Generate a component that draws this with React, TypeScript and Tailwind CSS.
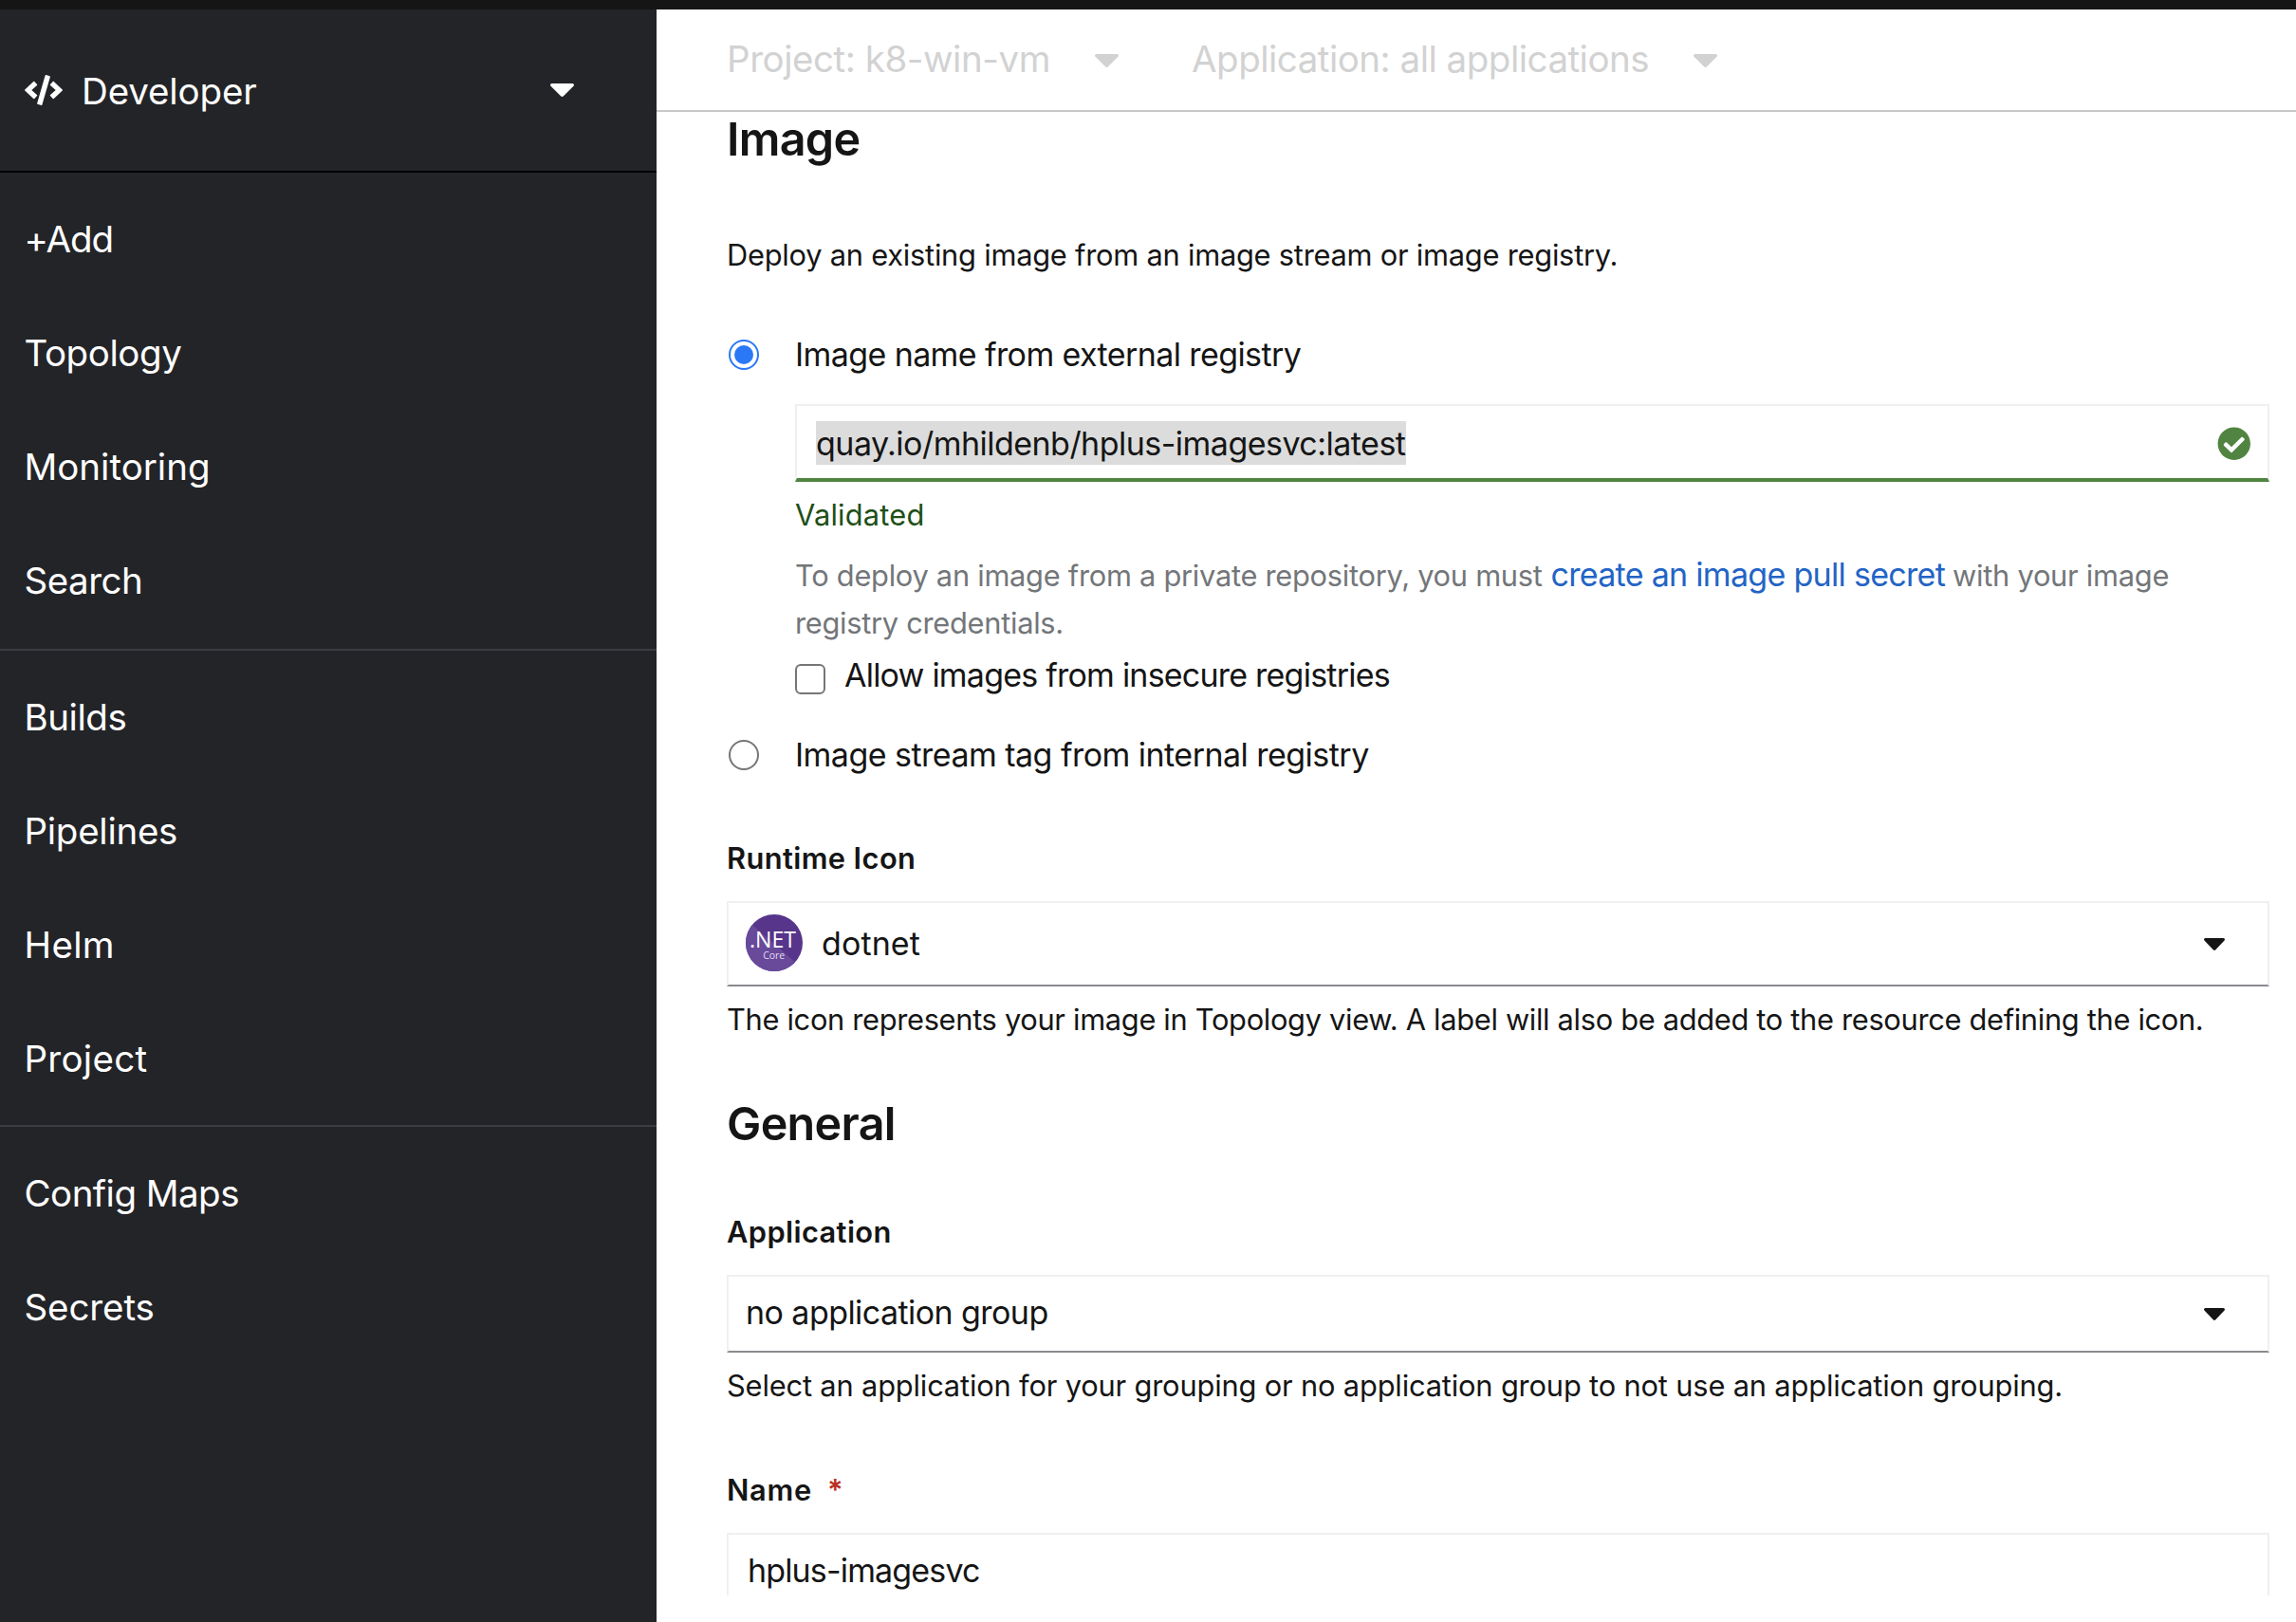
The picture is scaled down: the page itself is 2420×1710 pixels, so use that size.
import React from "react";
import { FaCheckCircle, FaCode } from "react-icons/fa";

function Caret({ className }: { className: string }) {
  return (
    <svg viewBox="11 192 298 169" preserveAspectRatio="none" fill="currentColor" className={className}>
      <path d="M31.3 192h257.3c17.8 0 26.7 21.5 14.1 34.1L174.1 354.8c-7.8 7.8-20.5 7.8-28.3 0L17.2 226.1C4.6 213.5 13.5 192 31.3 192z" />
    </svg>
  );
}

function DotnetIcon() {
  return (
    <svg viewBox="0 0 60 60" className="size-[60px] shrink-0">
      <defs>
        <clipPath id="disc">
          <circle cx="30" cy="30" r="30" />
        </clipPath>
      </defs>
      <g clipPath="url(#disc)">
        <rect width="60" height="60" fill="#56358a" />
        <path d="M0 5 L60 57 V60 H0 Z" fill="#68499a" />
      </g>
      <text x="4" y="35" fontSize="24" fontFamily="Open Sans, sans-serif" fill="#fff" textLength="49" lengthAdjust="spacingAndGlyphs">
        .NET
      </text>
      <text x="18.2" y="47.2" fontSize="10.8" fontFamily="Open Sans, sans-serif" fill="#e4dcf0" textLength="23" lengthAdjust="spacingAndGlyphs">
        Core
      </text>
    </svg>
  );
}

type Item = { label: string; tracking: string };

const groups: { items: Item[]; className: string }[] = [
  {
    className: "pt-[10px] pb-3 border-b-2 border-[#3c3d42]",
    items: [
      { label: "+Add", tracking: "tracking-[-1.1px]" },
      { label: "Topology", tracking: "tracking-[-0.42px]" },
      { label: "Monitoring", tracking: "tracking-[0px]" },
      { label: "Search", tracking: "tracking-[-0.5px]" },
    ],
  },
  {
    className: "py-[10px] border-b-2 border-[#3c3d42]",
    items: [
      { label: "Builds", tracking: "tracking-[-0.44px]" },
      { label: "Pipelines", tracking: "tracking-[-0.27px]" },
      { label: "Helm", tracking: "tracking-[0.3px]" },
      { label: "Project", tracking: "tracking-[0.28px]" },
    ],
  },
  {
    className: "pt-[10px]",
    items: [
      { label: "Config Maps", tracking: "tracking-[-0.53px]" },
      { label: "Secrets", tracking: "tracking-[-0.11px]" },
    ],
  },
];

function Sidebar() {
  return (
    <aside className="w-[692px] shrink-0 bg-[#232428] text-[38.5px] text-white">
      <div className="flex h-[172px] items-center border-b-2 border-black pl-[26px] pr-[87px]">
        <FaCode className="h-[32px] w-[40px] shrink-0" />
        <span className="ml-5 pt-[2px] leading-[52px] tracking-[-0.13px]">Developer</span>
        <Caret className="ml-auto h-[14px] w-[25px]" />
      </div>
      <nav>
        {groups.map((group, i) => (
          <ul key={i} className={group.className}>
            {group.items.map((item) => (
              <li key={item.label} className={`h-[120px] pl-[25.5px] leading-[120px] ${item.tracking}`}>
                {item.label}
              </li>
            ))}
          </ul>
        ))}
      </nav>
    </aside>
  );
}

const heading = "h-14 text-[48.5px] leading-[56px] font-[570] tracking-[-0.7px]";
const body = "h-12 text-[30.8px] leading-[48px] whitespace-nowrap";
const label = "h-12 text-[30.8px] leading-[48px] font-semibold whitespace-nowrap";
const large = "text-[34px] whitespace-nowrap";
const field = "border-2 border-[#f0f0f0]";

export default function App() {
  return (
    <div className="flex h-[1710px] w-[2420px] flex-col overflow-hidden bg-white font-[Inter,sans-serif] text-[#151515]">
      <div className="h-[10px] shrink-0 bg-[#151515]" />
      <div className="flex min-h-0 flex-1">
        <Sidebar />
        <main className="min-w-0 flex-1">
          <header className="flex h-[108px] items-center border-b-2 border-[#c8c8c8] pl-[74px] text-[38.5px] whitespace-nowrap text-[#d2d2d2]">
            <span className="w-[388px] tracking-[-0.45px]">Project: k8-win-vm</span>
            <Caret className="mt-px h-[14px] w-[25px]" />
            <span className="ml-[77px] w-[529px] tracking-[-0.5px]">Application: all applications</span>
            <Caret className="mt-px h-[14px] w-[25px]" />
          </header>

          <div className="h-[1564px] overflow-hidden pt-px pr-[28px] pl-[74px]">
            <h2 className={heading}>Image</h2>
            <p className={`mt-[70px] tracking-[-0.23px] ${body}`}>
              Deploy an existing image from an image stream or image registry.
            </p>

            <div className="mt-[54px] flex h-[52px] items-center">
              <span className="mt-[2px] ml-[2px] flex size-8 items-center justify-center rounded-full border-2 border-[#2b78f6]">
                <span className="size-5 rounded-full bg-[#2b78f6]" />
              </span>
              <span className={`ml-[38px] tracking-[-0.6px] ${large}`}>Image name from external registry</span>
            </div>

            <div className="ml-[72px]">
              <div className="mt-[27px] flex h-[82px] items-center justify-between border-2 border-b-4 border-[#f0f0f0] border-b-[#508440] pr-[18px] pl-5">
                <span className={`mt-[2px] h-[46px] w-[622px] bg-[#dcdcdc] leading-[48px] tracking-[-0.52px] ${large}`}>
                  quay.io/mhildenb/hplus-imagesvc:latest
                </span>
                <FaCheckCircle className="mt-[3px] size-[35.5px] text-[#508440]" />
              </div>
              <p className={`mt-[11px] tracking-[0.22px] text-[#1e4f18] ${body}`}>Validated</p>
              <div className="mt-[14px] text-[30.8px] leading-[50px] whitespace-nowrap text-[#737679]">
                <div className="flex h-[51px] items-baseline">
                  <span className="w-[796.5px] tracking-[-0.27px]">To deploy an image from a private repository, you must</span>
                  <span className="w-[423.5px] text-[34px] tracking-[-0.7px] text-[#2264c6]">create an image pull secret</span>
                  <span className="tracking-[-0.24px]">with your image</span>
                </div>
                <div className="h-[49px] tracking-[-0.28px]">registry credentials.</div>
              </div>
              <div className="mt-[5px] flex h-[52px]">
                <span className="mt-[14px] size-8 rounded-[6px] border-2 border-[#767676]" />
                <span className={`ml-5 leading-[52px] tracking-[-0.78px] ${large}`}>Allow images from insecure registries</span>
              </div>
            </div>

            <div className="mt-[31px] flex h-[52px] items-center">
              <span className="mt-[2px] ml-[2px] size-8 rounded-full border-2 border-[#767676]" />
              <span className={`ml-[38px] tracking-[-0.53px] ${large}`}>Image stream tag from internal registry</span>
            </div>

            <div className={`mt-[60px] tracking-[0.4px] ${label}`}>Runtime Icon</div>
            <div className={`mt-[21px] flex h-[90px] items-center border-b-[#8a8a8f] pr-[45px] pb-[2px] pl-[18px] ${field}`}>
              <DotnetIcon />
              <span className={`ml-5 tracking-[0.1px] ${large}`}>dotnet</span>
              <Caret className="mt-[2px] ml-auto h-[13px] w-[22px]" />
            </div>
            <p className={`mt-[11px] tracking-[-0.31px] ${body}`}>
              The icon represents your image in Topology view. A label will also be added to the resource defining the icon.
            </p>

            <h2 className={`mt-[58px] ${heading}`}>General</h2>
            <div className={`mt-[62px] tracking-[0.39px] ${label}`}>Application</div>
            <div className={`mt-[21px] flex h-[82px] items-center justify-between border-b-[#8a8a8f] pr-[45px] pb-[3px] pl-[18px] ${field}`}>
              <span className={`tracking-[-0.56px] ${large}`}>no application group</span>
              <Caret className="mt-[3px] h-[13px] w-[22px]" />
            </div>
            <p className={`mt-[11px] tracking-[-0.16px] ${body}`}>
              Select an application for your grouping or no application group to not use an application grouping.
            </p>

            <div className={`mt-[62px] flex tracking-[0.73px] ${label}`}>
              <span>Name</span>
              <span className="ml-4 text-[#b92f22]">*</span>
            </div>
            <div className={`mt-[21px] flex h-[82px] items-center pb-[3px] pl-5 ${field}`}>
              <span className={`tracking-[-0.85px] ${large}`}>hplus-imagesvc</span>
            </div>
          </div>
        </main>
      </div>
    </div>
  );
}
